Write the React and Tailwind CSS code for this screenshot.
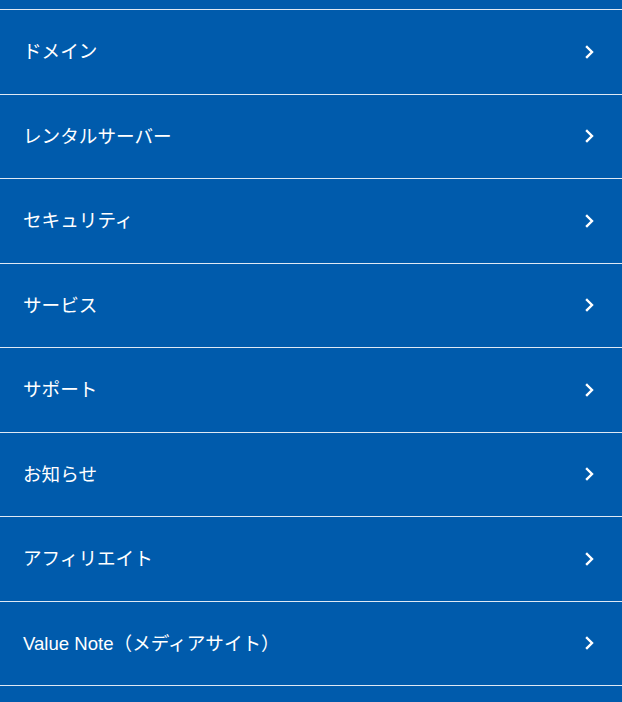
const items = [
  'ドメイン',
  'レンタルサーバー',
  'セキュリティ',
  'サービス',
  'サポート',
  'お知らせ',
  'アフィリエイト',
  'Value Note（メディアサイト）',
];

function Chevron() {
  return (
    <svg width="12" height="14" viewBox="0 0 12 14" fill="none" className="shrink-0">
      <path d="M3 2l5 5-5 5" stroke="white" strokeWidth="2.4" strokeLinecap="square" />
    </svg>
  );
}

export default function App() {
  return (
    <div
      className="w-[622px] h-[702px] overflow-hidden bg-[#005bac] text-white"
      style={{ fontFamily: '"Liberation Sans", Arial, "Noto Sans CJK JP", sans-serif' }}
    >
      <div className="h-[9px]" />
      <ul className="border-t border-[#dfe9f5]">
        {items.map((label) => (
          <li key={label} className="border-b border-[#dfe9f5]">
            <a href="#" className="flex items-center justify-between h-[83.5px] pl-[23px] pr-[26px]">
              <span className="text-[18.6px] leading-none pt-[2px]">{label}</span>
              <Chevron />
            </a>
          </li>
        ))}
      </ul>
    </div>
  );
}
